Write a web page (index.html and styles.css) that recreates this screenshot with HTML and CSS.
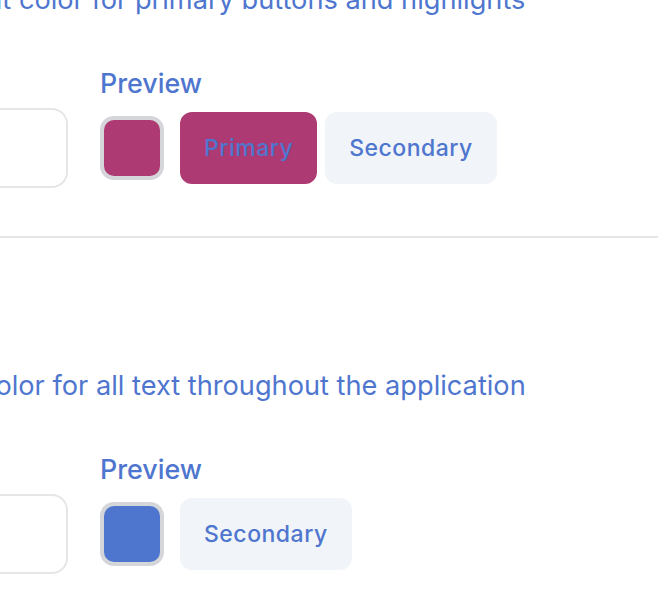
FILE: index.html
```html
<!DOCTYPE html>
<html lang="en">
<head>
<meta charset="utf-8">
<title>Theme colors</title>
<link rel="stylesheet" href="styles.css">
</head>
<body>
<main class="page">
  <section class="section">
    <p class="desc">Main accent color for primary buttons and highlights</p>
    <div class="field-grid">
      <div class="label-cell"></div>
      <div class="preview-label">Preview</div>
      <input class="hex-input" type="text" value="">
      <div class="preview-row">
        <span class="swatch swatch-primary"></span>
        <button class="btn btn-primary">Primary</button>
        <button class="btn btn-secondary">Secondary</button>
      </div>
    </div>
  </section>
  <hr class="divider">
  <section class="section section-next">
    <p class="desc">Main text color for all text throughout the application</p>
    <div class="field-grid">
      <div class="label-cell"></div>
      <div class="preview-label">Preview</div>
      <input class="hex-input" type="text" value="">
      <div class="preview-row">
        <span class="swatch swatch-text"></span>
        <button class="btn btn-secondary">Secondary</button>
      </div>
    </div>
  </section>
</main>
</body>
</html>
```

FILE: styles.css
```css
html, body {
  margin: 0;
  padding: 0;
  background: #ffffff;
  overflow: hidden;
}

body {
  font-family: Inter, "Noto Sans", "Liberation Sans", sans-serif;
  color: #4f76cf;
}

.page {
  margin: -16px 0 0 -146px;
}

.section-next {
  padding-top: 132px;
}

.desc {
  margin: 0;
  font-size: 27.2px;
  line-height: 32px;
  white-space: nowrap;
}

.field-grid {
  margin-top: 51px;
  display: grid;
  grid-template-columns: 214px auto;
  grid-template-rows: 32px 80px;
  column-gap: 32px;
  row-gap: 9px;
  align-items: center;
  justify-content: start;
}

.preview-label {
  font-size: 26.8px;
  line-height: 32px;
  font-weight: 500;
}

.hex-input {
  box-sizing: border-box;
  width: 214px;
  height: 80px;
  border: 2px solid #e6e6e6;
  border-radius: 16px;
  background: #fff;
  margin: 0;
  padding: 0 20px;
  font: inherit;
}

.preview-row {
  display: flex;
  align-items: center;
}

.swatch {
  box-sizing: border-box;
  width: 64px;
  height: 64px;
  border: 4px solid #d4d6da;
  border-radius: 14px;
  margin-right: 16px;
}

.swatch-primary { background: #ad3a72; }
.swatch-text { background: #4f76cf; }

.btn {
  box-sizing: border-box;
  height: 72px;
  border: none;
  border-radius: 12px;
  padding: 0 24px;
  font-family: inherit;
  font-size: 23px;
  font-weight: 500;
  letter-spacing: 0.5px;
  color: #4f76cf;
}

.btn-primary {
  background: #ad3a72;
  margin-right: 8px;
}

.btn-secondary {
  background: #f1f4f8;
}

.divider {
  margin: 48px 0 0 0;
  border: none;
  border-top: 2px solid #e5e5e5;
  height: 0;
}
```
